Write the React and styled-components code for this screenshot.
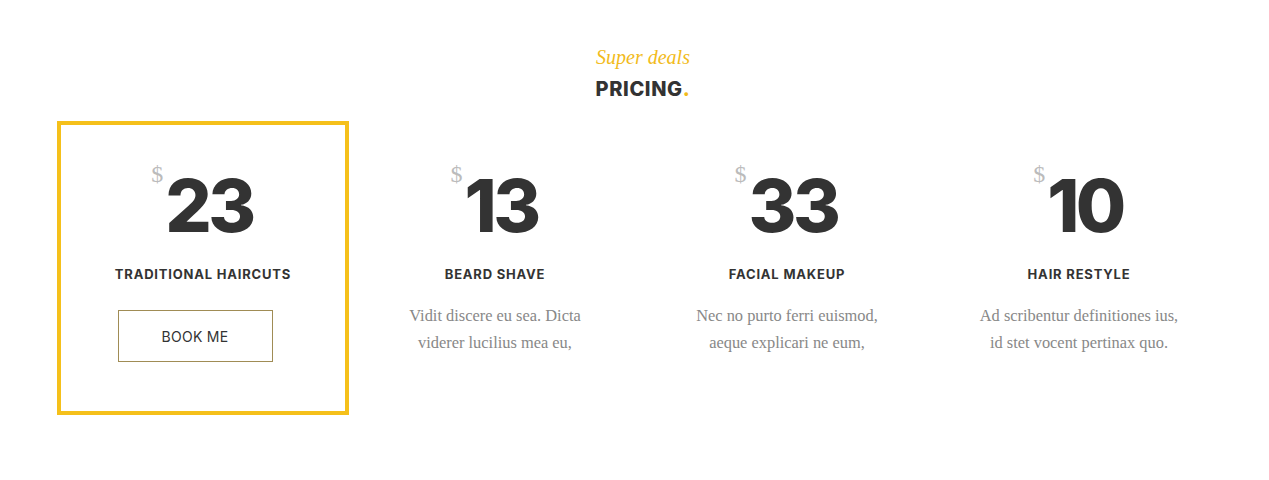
import React from "react";
import styled, { createGlobalStyle } from "styled-components";

const GlobalStyle = createGlobalStyle`
  body {
    margin: 0;
    background: #fff;
    font-family: "Inter", "Liberation Sans", sans-serif;
  }
`;

const Section = styled.section`
  width: 1269px;
  height: 480px;
  box-sizing: border-box;
  padding: 44px 40px 0 57px;
`;

const Head = styled.div`
  text-align: center;
  margin-bottom: 19px;
`;

const SubTitle = styled.div`
  font-family: "Liberation Serif", serif;
  font-style: italic;
  font-size: 20px;
  line-height: 26px;
  color: #f2bb1b;
`;

const Title = styled.h2`
  margin: 6px 0 0;
  font-size: 20px;
  line-height: 26px;
  font-weight: 800;
  letter-spacing: 0.6px;
  color: #333;
  span {
    color: #f2bb1b;
  }
`;

const Grid = styled.div`
  display: grid;
  grid-template-columns: repeat(4, 292px);
`;

const Card = styled.div`
  box-sizing: border-box;
  height: 294px;
  border: 4px solid ${(p) => (p.$active ? "#f5c01a" : "transparent")};
  padding-top: 44px;
  display: flex;
  flex-direction: column;
  align-items: center;
`;

const Price = styled.div`
  display: flex;
  align-items: flex-start;
  margin-left: -2px;
`;

const Currency = styled.span`
  font-family: "Liberation Serif", serif;
  font-size: 24px;
  line-height: 1;
  color: #bbb;
  margin-top: -7px;
  margin-right: 2px;
`;

const Amount = styled.span`
  font-size: 73px;
  line-height: 1;
  font-weight: 800;
  letter-spacing: -3.5px;
  color: #333;
`;

const Name = styled.h3`
  margin: 24px 0 0;
  font-size: 13px;
  line-height: 16px;
  font-weight: 700;
  letter-spacing: 0.8px;
  color: #333;
  text-transform: uppercase;
`;

const BookButton = styled.button`
  margin: 28px 16px 0 0;
  width: 155px;
  height: 52px;
  background: #fff;
  border: 1px solid #a08c55;
  font-family: "Inter", "Liberation Sans", sans-serif;
  font-size: 14px;
  letter-spacing: 0.3px;
  color: #333;
  cursor: pointer;
`;

const Desc = styled.p`
  margin: 20px 0 0;
  font-family: "Liberation Serif", serif;
  font-size: 16.4px;
  line-height: 27px;
  color: #888;
  text-align: center;
  max-width: 210px;
`;

const plans = [
  { price: 23, name: "Traditional haircuts", active: true },
  { price: 13, name: "Beard shave", lines: ["Vidit discere eu sea. Dicta", "viderer lucilius mea eu,"] },
  { price: 33, name: "Facial makeup", lines: ["Nec no purto ferri euismod,", "aeque explicari ne eum,"] },
  { price: 10, name: "Hair restyle", lines: ["Ad scribentur definitiones ius,", "id stet vocent pertinax quo."] },
];

export default function App() {
  return (
    <>
      <GlobalStyle />
      <Section>
        <Head>
          <SubTitle>Super deals</SubTitle>
          <Title>
            PRICING<span>.</span>
          </Title>
        </Head>
        <Grid>
          {plans.map((p) => (
            <Card key={p.name} $active={p.active}>
              <Price>
                <Currency>$</Currency>
                <Amount>{p.price}</Amount>
              </Price>
              <Name>{p.name}</Name>
              {p.active ? (
                <BookButton>BOOK ME</BookButton>
              ) : (
                <Desc>
                  {p.lines[0]}
                  <br />
                  {p.lines[1]}
                </Desc>
              )}
            </Card>
          ))}
        </Grid>
      </Section>
    </>
  );
}
